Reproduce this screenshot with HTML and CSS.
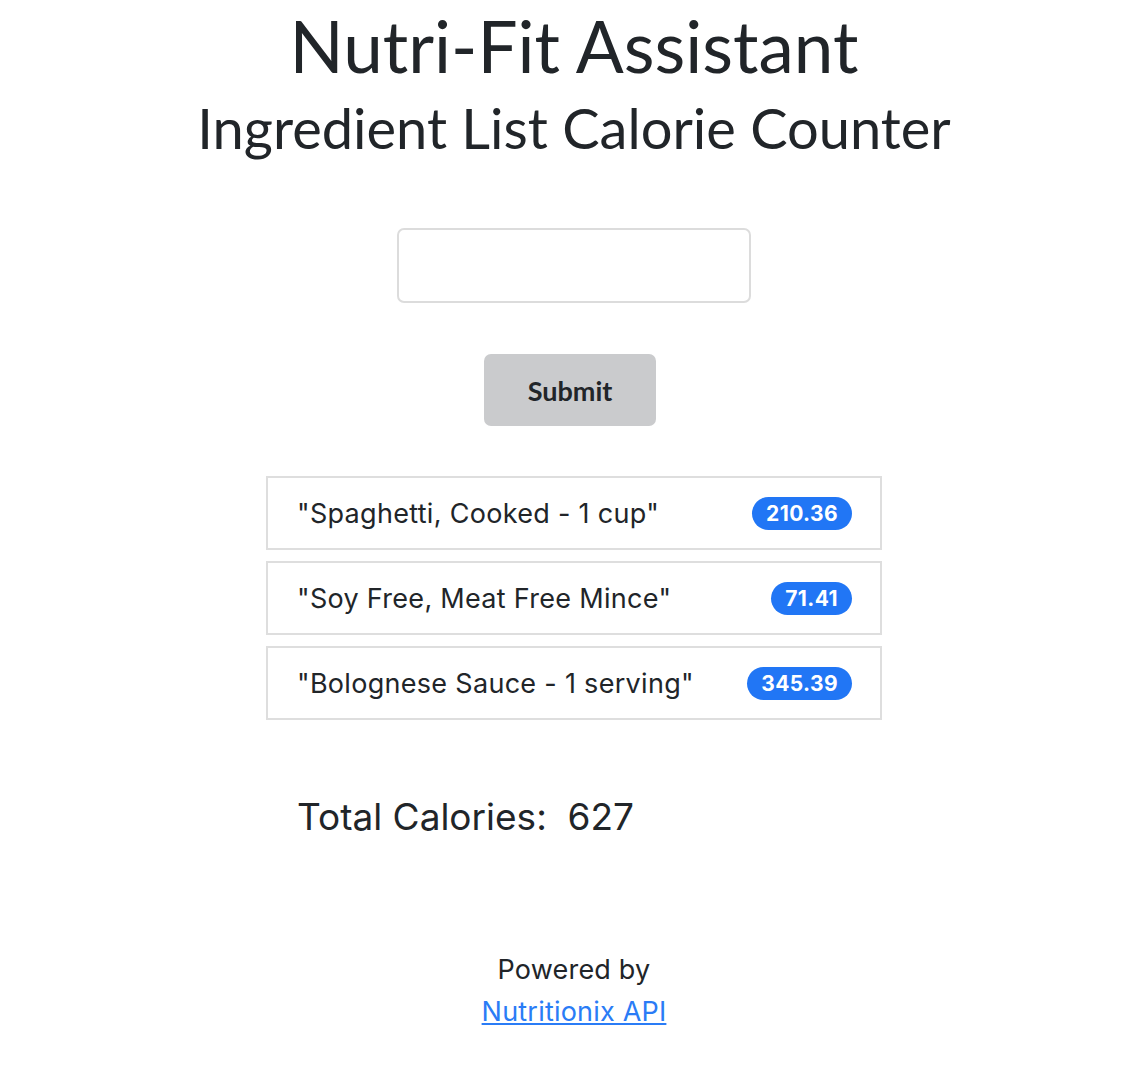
FILE: index.html
```html
<!DOCTYPE html>
<html>
<head>
<meta charset="utf-8">
<link rel="stylesheet" href="styles.css">
</head>
<body>
<div class="app">
  <h1 class="title">Nutri-Fit Assistant</h1>
  <h2 class="subtitle">Ingredient List Calorie Counter</h2>
  <form class="form">
    <input class="field" type="text">
    <button class="submit" type="button">Submit</button>
  </form>
  <ul class="list">
    <li class="item"><span class="name">"Spaghetti, Cooked - 1 cup"</span><span class="badge">210.36</span></li>
    <li class="item"><span class="name">"Soy Free, Meat Free Mince"</span><span class="badge">71.41</span></li>
    <li class="item"><span class="name">"Bolognese Sauce - 1 serving"</span><span class="badge">345.39</span></li>
  </ul>
  <div class="total">Total Calories:&nbsp; 627</div>
  <footer class="footer">
    <div>Powered by</div>
    <a class="link" href="#">Nutritionix API</a>
  </footer>
</div>
</body>
</html>
```
FILE: styles.css
```css
html, body { margin: 0; padding: 0; background: #fff; }
body {
  font-family: Inter, "Noto Sans", sans-serif;
  color: #212529;
}
.app {
  display: flex;
  flex-direction: column;
  align-items: center;
  padding-left: 10px;
}
.title {
  font-family: Lato, sans-serif;
  font-weight: 400;
  font-size: 71px;
  line-height: 1.2;
  margin: 3px 0 0;
}
.subtitle {
  font-family: Lato, sans-serif;
  font-weight: 400;
  font-size: 56px;
  line-height: 1.2;
  margin: 6px 0 0;
}
.form {
  display: flex;
  flex-direction: column;
  align-items: center;
  margin-top: 67px;
}
.field {
  box-sizing: border-box;
  width: 354px;
  height: 75px;
  border: 2px solid #dcdcdc;
  border-radius: 7px;
  outline: none;
}
.submit {
  margin-top: 51px;
  margin-right: 8px;
  width: 172px;
  height: 72px;
  border: none;
  border-radius: 7px;
  background: #cacbcd;
  color: #212529;
  font-family: Lato, sans-serif;
  font-weight: 700;
  font-size: 27px;
}
.list {
  list-style: none;
  margin: 50px 0 0;
  padding: 0;
  width: 616px;
  display: flex;
  flex-direction: column;
  gap: 11px;
}
.item {
  box-sizing: border-box;
  height: 74px;
  border: 2px solid #dedede;
  display: flex;
  align-items: center;
  justify-content: space-between;
  padding: 0 28px 0 29px;
  font-size: 27px;
  letter-spacing: 0.3px;
}
.badge {
  background: #2176f5;
  color: #fff;
  font-weight: 700;
  font-size: 21px;
  letter-spacing: 0.4px;
  border-radius: 17px;
  padding: 4px 14px;
  line-height: 25px;
}
.total {
  width: 616px;
  box-sizing: border-box;
  padding-left: 31px;
  margin-top: 74px;
  font-size: 37px;
}
.footer {
  margin-top: 110px;
  text-align: center;
  font-size: 27px;
  letter-spacing: 0.2px;
  line-height: 42px;
}
.link {
  color: #2a7cf6;
  text-decoration: underline;
}
```
